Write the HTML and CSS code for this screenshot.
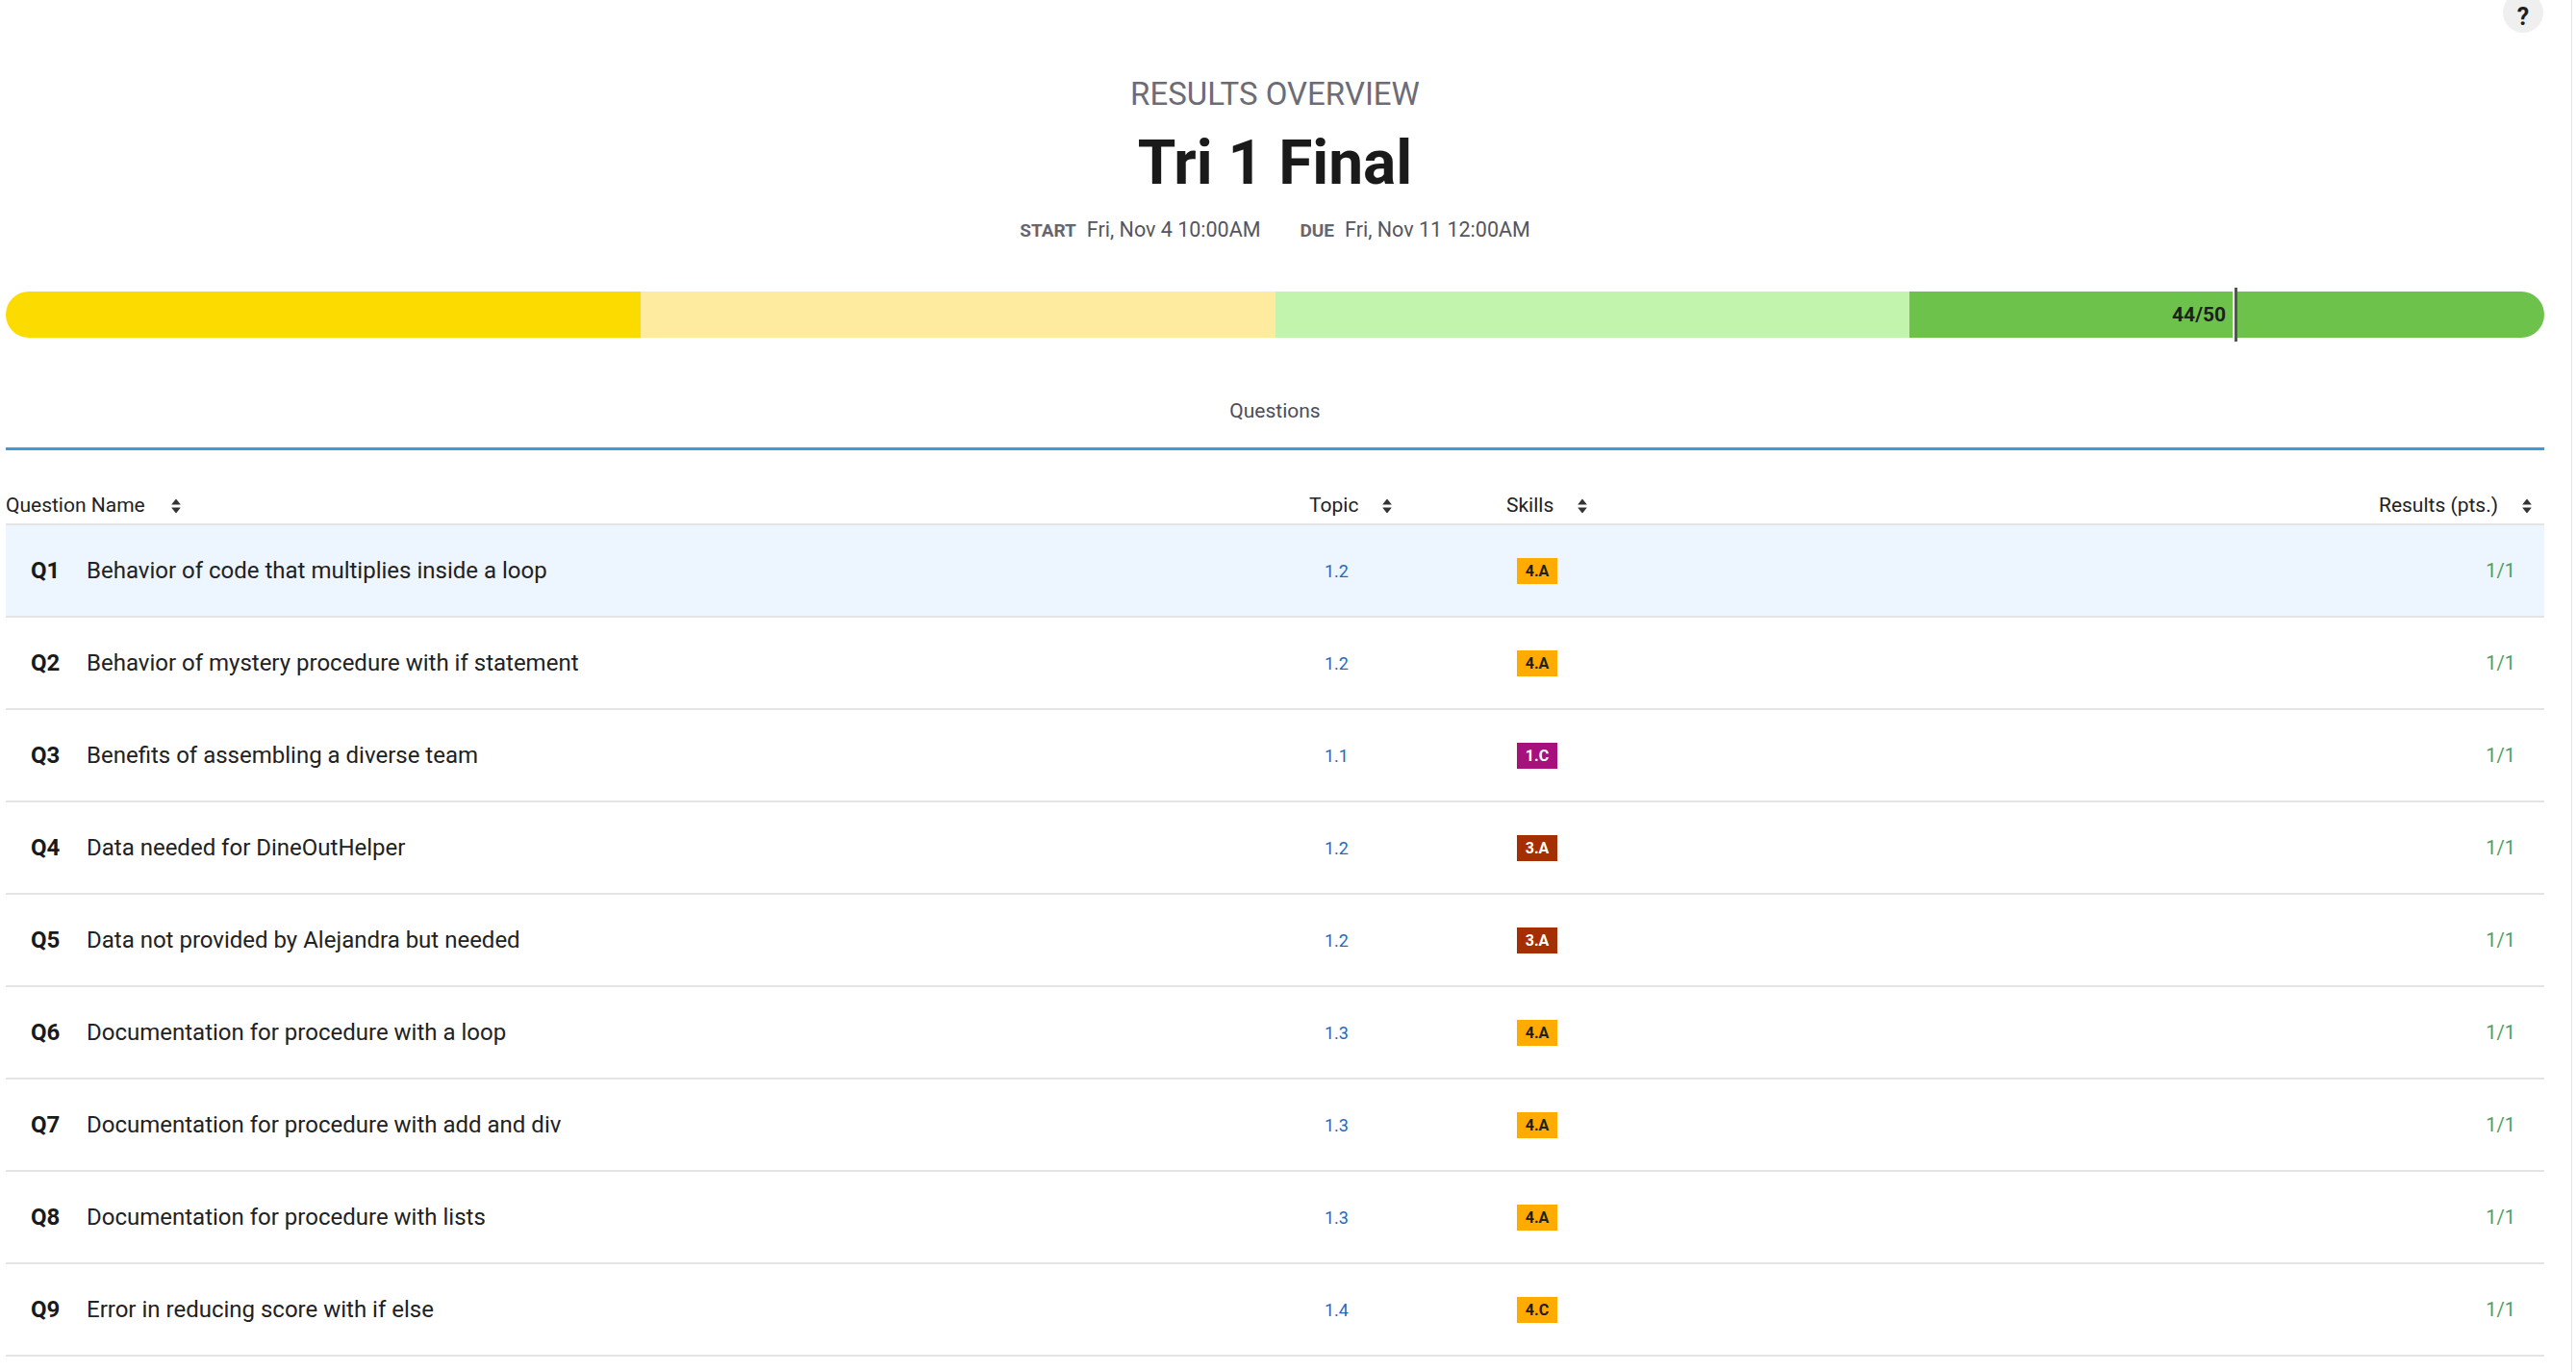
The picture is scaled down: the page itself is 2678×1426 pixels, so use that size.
FILE: index.html
```html
<!DOCTYPE html>
<html lang="en">
<head>
<meta charset="utf-8">
<title>Results Overview - Tri 1 Final</title>
<link rel="stylesheet" href="styles.css">
</head>
<body>
<div class="page">
  <button class="help" type="button">?</button>

  <header class="hero">
    <div class="overline">RESULTS OVERVIEW</div>
    <h1 class="title">Tri 1 Final</h1>
    <div class="dates">
      <span class="date-label">START</span><span class="date-value">Fri, Nov 4 10:00AM</span>
      <span class="date-label due">DUE</span><span class="date-value">Fri, Nov 11 12:00AM</span>
    </div>
  </header>

  <div class="score-bar">
    <div class="seg seg-1"></div>
    <div class="seg seg-2"></div>
    <div class="seg seg-3"></div>
    <div class="seg seg-4">
      <div class="score-fill" style="width: 51.2%;"><span class="score-text">44/50</span></div>
      <span class="score-marker" style="left: 51.2%;"></span>
    </div>
  </div>

  <nav class="tabs">
    <span class="tab">Questions</span>
  </nav>

  <div class="table">
    <div class="thead">
      <div class="th th-name">Question Name <svg class="sort" viewBox="0 0 10 16"><path d="M5 0.5 L9.5 6 Q10 6.6 9.2 6.6 H0.8 Q0 6.6 0.5 6 Z"/><path d="M0.8 9.4 H9.2 Q10 9.4 9.5 10 L5 15.5 L0.5 10 Q0 9.4 0.8 9.4 Z"/></svg></div>
      <div class="th th-topic">Topic <svg class="sort" viewBox="0 0 10 16"><path d="M5 0.5 L9.5 6 Q10 6.6 9.2 6.6 H0.8 Q0 6.6 0.5 6 Z"/><path d="M0.8 9.4 H9.2 Q10 9.4 9.5 10 L5 15.5 L0.5 10 Q0 9.4 0.8 9.4 Z"/></svg></div>
      <div class="th th-skills">Skills <svg class="sort" viewBox="0 0 10 16"><path d="M5 0.5 L9.5 6 Q10 6.6 9.2 6.6 H0.8 Q0 6.6 0.5 6 Z"/><path d="M0.8 9.4 H9.2 Q10 9.4 9.5 10 L5 15.5 L0.5 10 Q0 9.4 0.8 9.4 Z"/></svg></div>
      <div class="th th-results">Results (pts.) <svg class="sort" viewBox="0 0 10 16"><path d="M5 0.5 L9.5 6 Q10 6.6 9.2 6.6 H0.8 Q0 6.6 0.5 6 Z"/><path d="M0.8 9.4 H9.2 Q10 9.4 9.5 10 L5 15.5 L0.5 10 Q0 9.4 0.8 9.4 Z"/></svg></div>
    </div>

    <div class="tr active">
      <div class="td td-name"><span class="qnum">Q1</span><span class="qtitle">Behavior of code that multiplies inside a loop</span></div>
      <div class="td td-topic">1.2</div>
      <div class="td td-skills"><span class="skill skill-4">4.A</span></div>
      <div class="td td-results">1/1</div>
    </div>
    <div class="tr">
      <div class="td td-name"><span class="qnum">Q2</span><span class="qtitle">Behavior of mystery procedure with if statement</span></div>
      <div class="td td-topic">1.2</div>
      <div class="td td-skills"><span class="skill skill-4">4.A</span></div>
      <div class="td td-results">1/1</div>
    </div>
    <div class="tr">
      <div class="td td-name"><span class="qnum">Q3</span><span class="qtitle">Benefits of assembling a diverse team</span></div>
      <div class="td td-topic">1.1</div>
      <div class="td td-skills"><span class="skill skill-1">1.C</span></div>
      <div class="td td-results">1/1</div>
    </div>
    <div class="tr">
      <div class="td td-name"><span class="qnum">Q4</span><span class="qtitle">Data needed for DineOutHelper</span></div>
      <div class="td td-topic">1.2</div>
      <div class="td td-skills"><span class="skill skill-3">3.A</span></div>
      <div class="td td-results">1/1</div>
    </div>
    <div class="tr">
      <div class="td td-name"><span class="qnum">Q5</span><span class="qtitle">Data not provided by Alejandra but needed</span></div>
      <div class="td td-topic">1.2</div>
      <div class="td td-skills"><span class="skill skill-3">3.A</span></div>
      <div class="td td-results">1/1</div>
    </div>
    <div class="tr">
      <div class="td td-name"><span class="qnum">Q6</span><span class="qtitle">Documentation for procedure with a loop</span></div>
      <div class="td td-topic">1.3</div>
      <div class="td td-skills"><span class="skill skill-4">4.A</span></div>
      <div class="td td-results">1/1</div>
    </div>
    <div class="tr">
      <div class="td td-name"><span class="qnum">Q7</span><span class="qtitle">Documentation for procedure with add and div</span></div>
      <div class="td td-topic">1.3</div>
      <div class="td td-skills"><span class="skill skill-4">4.A</span></div>
      <div class="td td-results">1/1</div>
    </div>
    <div class="tr">
      <div class="td td-name"><span class="qnum">Q8</span><span class="qtitle">Documentation for procedure with lists</span></div>
      <div class="td td-topic">1.3</div>
      <div class="td td-skills"><span class="skill skill-4">4.A</span></div>
      <div class="td td-results">1/1</div>
    </div>
    <div class="tr">
      <div class="td td-name"><span class="qnum">Q9</span><span class="qtitle">Error in reducing score with if else</span></div>
      <div class="td td-topic">1.4</div>
      <div class="td td-skills"><span class="skill skill-4">4.C</span></div>
      <div class="td td-results">1/1</div>
    </div>
  </div>
</div>
</body>
</html>
```

FILE: styles.css
```css
html, body {
  margin: 0;
  padding: 0;
  background: #ffffff;
  overflow: hidden;
}

body {
  font-family: Roboto, "Liberation Sans", Arial, sans-serif;
  color: #222222;
}

.page {
  position: relative;
  box-sizing: border-box;
  width: 2674px;
  min-height: 1426px;
  padding: 0 28px 0 6px;
  border-right: 1px solid #e4e4e4;
}

.help {
  position: absolute;
  top: -8px;
  right: 29px;
  width: 42px;
  height: 42px;
  border: none;
  border-radius: 50%;
  background: #efefef;
  color: #1e1e1e;
  font-family: Roboto, "Liberation Sans", sans-serif;
  font-weight: 700;
  font-size: 25px;
  line-height: 42px;
  padding: 5px 0 0 0;
  text-align: center;
}

/* ---------- hero ---------- */
.hero {
  display: flex;
  flex-direction: column;
  align-items: center;
  padding-top: 79px;
}

.overline {
  font-size: 33px;
  line-height: 38px;
  font-weight: 400;
  color: #6c6c76;
}

.title {
  margin: 15px 0 0 0;
  font-size: 64px;
  line-height: 76px;
  font-weight: 700;
  color: #1a1a1a;
}

.dates {
  margin-top: 19px;
  display: flex;
  align-items: baseline;
  font-size: 21.5px;
  line-height: 24px;
}

.date-label {
  font-size: 19px;
  font-weight: 700;
  color: #666670;
  margin-right: 11px;
}

.date-label.due {
  margin-left: 41px;
}

.date-value {
  color: #555560;
}

/* ---------- score bar ---------- */
.score-bar {
  margin-top: 51px;
  display: grid;
  grid-template-columns: repeat(4, 1fr);
  height: 48px;
}

.seg {
  position: relative;
  height: 48px;
}

.seg-1 {
  background: #fcdc00;
  border-radius: 24px 0 0 24px;
}

.seg-2 {
  background: #feeb9f;
}

.seg-3 {
  background: #c2f4ad;
}

.seg-4 {
  background: #6cc24b;
  border-radius: 0 24px 24px 0;
}

.score-fill {
  height: 48px;
  display: flex;
  align-items: center;
  justify-content: flex-end;
}

.score-text {
  font-size: 21px;
  font-weight: 700;
  color: #1f1f1f;
  margin-right: 9px;
}

.score-marker {
  position: absolute;
  top: -4px;
  width: 3px;
  height: 56px;
  background: #555558;
  border-left: 2px solid #ffffff;
  margin-left: -2px;
}

/* ---------- tabs ---------- */
.tabs {
  margin-top: 64px;
  display: flex;
  justify-content: center;
  padding-bottom: 25px;
  border-bottom: 3px solid #3f9ad8;
}

.tab {
  font-size: 21px;
  line-height: 25px;
  color: #4d4d58;
}

/* ---------- table ---------- */
.table {
  display: flex;
  flex-direction: column;
}

.thead,
.tr {
  display: grid;
  grid-template-columns: 1fr 205px 400px 679px;
  align-items: center;
}

.thead {
  padding: 45px 0 6px 0;
  border-bottom: 2px solid #e4e4e4;
}

.th {
  display: flex;
  align-items: center;
  font-size: 21px;
  line-height: 25px;
  color: #222222;
  white-space: nowrap;
}

.th-results {
  justify-content: flex-end;
  padding-right: 13px;
}

.sort {
  width: 10px;
  height: 16px;
  margin-left: 25px;
  fill: #333333;
}

.th-name .sort {
  margin-left: 27px;
}

.tr {
  height: 94px;
  border-bottom: 2px solid #e4e4e4;
}

.tr.active {
  background: #edf5fe;
}

.td {
  white-space: nowrap;
}

.td-name {
  display: flex;
  align-items: baseline;
  padding-left: 26px;
  font-size: 24px;
  line-height: 28px;
}

.qnum {
  width: 58px;
  font-weight: 700;
  color: #1a1a1a;
}

.qtitle {
  color: #222222;
}

.td-topic {
  padding-left: 16px;
  font-size: 18px;
  color: #1d6bbf;
}

.td-skills {
  padding-left: 11px;
}

.skill {
  display: inline-flex;
  align-items: center;
  justify-content: center;
  width: 42px;
  height: 27px;
  font-size: 16px;
  font-weight: 700;
}

.skill-4 {
  background: #ffab00;
  color: #1e1e1e;
}

.skill-1 {
  background: #a7117e;
  color: #ffffff;
}

.skill-3 {
  background: #a32f02;
  color: #ffffff;
}

.td-results {
  text-align: right;
  padding-right: 30px;
  font-size: 20px;
  color: #4f9e5a;
}
```
